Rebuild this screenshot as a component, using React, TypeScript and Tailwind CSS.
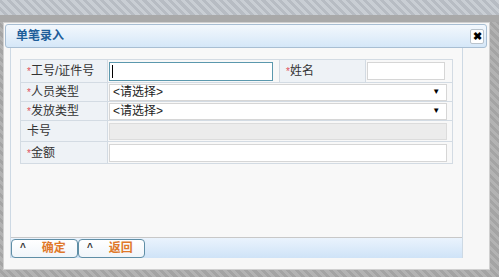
import React from "react";

const font = { fontFamily: '"Liberation Sans", "Noto Sans CJK SC", sans-serif' };

function Label({ text, required = true }: { text: string; required?: boolean }) {
  return (
    <td className="h-full border border-[#d3dbe3] bg-[#eef2f6] pl-[6px] text-[12px] text-[#333]">
      {required && <span className="text-[10px] text-[#e0505a]">*</span>}
      {text}
    </td>
  );
}

function Select() {
  return (
    <div className="flex h-[17px] w-[338px] items-center justify-between border border-[#d6d6d6] bg-white pl-[3px] pr-[6px] text-[12px] text-[#222]">
      <span>&lt;请选择&gt;</span>
      <span className="text-[8px] text-black">▼</span>
    </div>
  );
}

export default function App() {
  return (
    <div
      className="h-[277px] w-[499px] overflow-hidden bg-[repeating-linear-gradient(45deg,#b3b3b3_0px,#b3b3b3_3px,#a4a4a4_3px,#a4a4a4_6px)]"
      style={font}
    >
      {/* top strip behind the dialog */}
      <div className="h-[15px] bg-[repeating-linear-gradient(45deg,#c9ced4_0px,#c9ced4_3px,#b7bcc3_3px,#b7bcc3_6px)]" />
      <div className="h-[7px] bg-[#a9a9a9]" />

      <div className="ml-[3px] flex h-[248px] w-[487px] flex-col border border-[#d0d0d0] bg-[#f7f7f7] pt-[1px]">
        {/* header */}
        <div className="ml-[1px] flex h-[24px] w-[482px] items-center justify-between rounded-[3px] border border-[#a8bed3] bg-gradient-to-b from-[#f3f8fd] to-[#d5e7f8] pl-[10px] pr-[2px]">
          <span className="text-[12px] font-bold text-[#1d5d99]">单笔录入</span>
          <div className="flex h-[15px] w-[14px] items-center justify-center rounded-[2px] border border-[#b9c3cc] bg-white text-[11px] leading-none font-bold text-black">
            ✖
          </div>
        </div>

        {/* content panel */}
        <div className="ml-[6px] flex w-[453px] flex-1 flex-col border-x border-[#cdd9e4] bg-[#f8f8f8]">
          <div className="flex-1 pl-[9px] pt-[11px]">
            <table className="w-[433px] border-collapse">
              <colgroup>
                <col className="w-[88px]" />
                <col className="w-[172px]" />
                <col className="w-[86px]" />
                <col className="w-[87px]" />
              </colgroup>
              <tbody>
                <tr className="h-[23px]">
                  <Label text="工号/证件号" />
                  <td className="border border-[#d3dbe3] pl-[1px]">
                    <div className="flex h-[19px] w-[164px] items-center border border-[#5b98ad] bg-white pl-[2px]">
                      <span className="h-[13px] w-px bg-black" />
                    </div>
                  </td>
                  <Label text="姓名" />
                  <td className="border border-[#d3dbe3] pl-[1px]">
                    <div className="h-[18px] w-[78px] border border-[#d6d6d6] bg-white" />
                  </td>
                </tr>
                <tr className="h-[19px]">
                  <Label text="人员类型" />
                  <td colSpan={3} className="border border-[#d3dbe3] pl-[1px]">
                    <Select />
                  </td>
                </tr>
                <tr className="h-[19px]">
                  <Label text="发放类型" />
                  <td colSpan={3} className="border border-[#d3dbe3] pl-[1px]">
                    <Select />
                  </td>
                </tr>
                <tr className="h-[21px]">
                  <Label text="卡号" required={false} />
                  <td colSpan={3} className="border border-[#d3dbe3] pl-[1px]">
                    <div className="h-[17px] w-[338px] border border-[#dcdcdc] bg-[#ececec]" />
                  </td>
                </tr>
                <tr className="h-[22px]">
                  <Label text="金额" />
                  <td colSpan={3} className="border border-[#d3dbe3] pl-[1px]">
                    <div className="h-[18px] w-[338px] border border-[#d6d6d6] bg-white" />
                  </td>
                </tr>
              </tbody>
            </table>
          </div>

          {/* footer buttons */}
          <div className="flex h-[21px] items-center border-t border-[#c8c8c8] bg-gradient-to-b from-[#eaf3fd] to-[#cfe3f7]">
            {["确定", "返回"].map((t) => (
              <div
                key={t}
                className="flex h-[19px] w-[67px] items-center rounded-[4px] border-[1.5px] border-[#5f8ea6] bg-gradient-to-b from-white to-[#f0f5fa] pl-[8px]"
              >
                <span className="text-[10px] leading-none font-bold text-[#333]">^</span>
                <span className="ml-[16px] text-[12px] font-bold text-[#e0782a]">{t}</span>
              </div>
            ))}
          </div>
        </div>
        <div className="h-[11px]" />
      </div>
    </div>
  );
}
